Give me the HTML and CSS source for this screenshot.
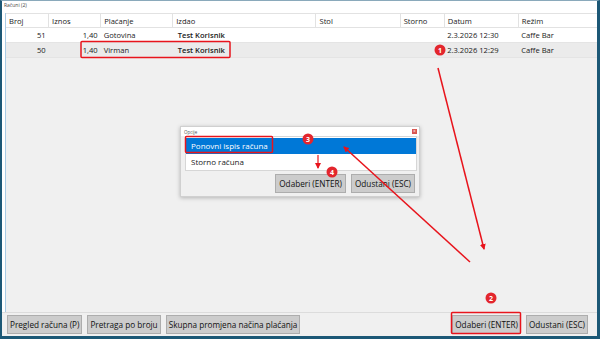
FILE: index.html
```html
<!DOCTYPE html>
<html lang="hr">
<head>
    <meta charset="UTF-8">
    <title>Računi</title>
    <link rel="stylesheet" href="styles.css">
</head>
<body>
    <div class="window">
        <div class="titlebar">Računi (2)</div>
        <div class="content">
            <table class="grid">
                <tr>
                    <th class="c-broj">Broj</th>
                    <th class="c-iznos">Iznos</th>
                    <th class="c-plac">Plaćanje</th>
                    <th class="c-izdao">Izdao</th>
                    <th class="c-stol">Stol</th>
                    <th class="c-storno">Storno</th>
                    <th class="c-datum">Datum</th>
                    <th class="c-rezim">Režim</th>
                </tr>
                <tr>
                    <td class="num">51</td>
                    <td class="num">1,40</td>
                    <td>Gotovina</td>
                    <td class="bold">Test Korisnik</td>
                    <td></td>
                    <td></td>
                    <td>2.3.2026 12:30</td>
                    <td>Caffe Bar</td>
                </tr>
                <tr class="alt">
                    <td class="num">50</td>
                    <td class="num">1,40</td>
                    <td>Virman</td>
                    <td class="bold">Test Korisnik</td>
                    <td></td>
                    <td></td>
                    <td>2.3.2026 12:29</td>
                    <td>Caffe Bar</td>
                </tr>
            </table>
        </div>
        <div class="bottom-bar">
            <div class="btn-group">
                <button class="btn">Pregled računa (P)</button>
                <button class="btn">Pretraga po broju</button>
                <button class="btn">Skupna promjena načina plaćanja</button>
            </div>
            <div class="btn-group">
                <button class="btn btn-main">Odaberi (ENTER)</button>
                <button class="btn">Odustani (ESC)</button>
            </div>
        </div>

        <div class="dialog">
            <div class="dialog-title">
                <span>Opcije</span>
                <span class="close">×</span>
            </div>
            <ul class="options">
                <li class="active">Ponovni ispis računa</li>
                <li>Storno računa</li>
            </ul>
            <div class="dialog-buttons">
                <button class="btn dlg-btn">Odaberi (ENTER)</button>
                <button class="btn dlg-btn">Odustani (ESC)</button>
            </div>
        </div>

        <svg class="marks" width="600" height="339" viewBox="0 0 600 339">
            <defs>
                <marker id="head" markerWidth="6" markerHeight="6" refX="5" refY="3" orient="auto" markerUnits="userSpaceOnUse">
                    <path d="M0,0 L6,3 L0,6 Z" fill="#e8141c"/>
                </marker>
            </defs>
            <!-- boxes -->
            <rect x="81" y="41.5" width="149" height="16" rx="1" class="box"/>
            <rect x="185.5" y="136.5" width="87" height="16" rx="1" class="box"/>
            <rect x="451.5" y="312.5" width="69" height="21" rx="1" class="box"/>
            <!-- arrows -->
            <line x1="438" y1="68" x2="484" y2="249" class="arrow" marker-end="url(#head)"/>
            <line x1="470" y1="262" x2="344" y2="147" class="arrow" marker-end="url(#head)"/>
            <line x1="318" y1="155" x2="318" y2="168" class="arrow thin" marker-end="url(#head)"/>
            <!-- badges -->
            <circle cx="440" cy="50" r="5.5" class="badge"/>
            <text x="440" y="52.6" class="badge-num">1</text>
            <circle cx="491" cy="298" r="5.5" class="badge"/>
            <text x="491" y="300.6" class="badge-num">2</text>
            <circle cx="308" cy="139" r="5.5" class="badge"/>
            <text x="308" y="141.6" class="badge-num">3</text>
            <circle cx="332" cy="172" r="5.5" class="badge"/>
            <text x="332" y="174.6" class="badge-num">4</text>
        </svg>
    </div>
</body>
</html>
```

FILE: styles.css
```css
body {
    margin: 0;
    font-family: "Open Sans", "Noto Sans", sans-serif;
    color: #1a1a1a;
}
.window {
    position: relative;
    width: 600px;
    height: 339px;
    box-sizing: border-box;
    border: 3px solid #1c5876;
    border-top: 1px solid #8aa9bb;
    border-left: 2px solid #1c5876;
    background: #ffffff;
    display: flex;
    flex-direction: column;
    overflow: hidden;
}
.titlebar {
    height: 12px;
    font-size: 5px;
    line-height: 8px;
    padding-left: 2px;
    color: #444;
}
.content {
    flex: 1;
    margin-left: 3px;
    border-left: 1px solid #a8cbe4;
    background: #f0f0f0;
}
.grid {
    border-collapse: collapse;
    table-layout: fixed;
    width: 592px;
    font-size: 7.6px;
}
.grid th {
    height: 13px;
    font-weight: normal;
    text-align: left;
    padding: 0 3px;
    background: #ffffff;
    border-top: 1px solid #e2e2e2;
    border-bottom: 1px solid #e2e2e2;
    border-left: 1px solid #e2e2e2;
    color: #222;
}
.grid th:first-child {
    border-left: none;
}
.grid td {
    height: 14px;
    padding: 0 3px;
    background: #ffffff;
    border-bottom: 1px solid #e4e4e4;
    white-space: nowrap;
}
.grid .alt td {
    background: #ebebeb;
}
.grid td.num {
    text-align: right;
}
.grid td.bold {
    font-weight: 600;
    padding-left: 5px;
}
.c-broj { width: 36px; }
.c-iznos { width: 45px; }
.c-plac { width: 65px; }
.c-izdao { width: 136px; }
.c-stol { width: 77px; }
.c-storno { width: 37px; }
.c-datum { width: 67px; }
.c-rezim { width: 73px; }

.bottom-bar {
    height: 23px;
    border-top: 1px solid #dcdcdc;
    background: #f0f0f0;
    display: flex;
    justify-content: space-between;
    align-items: center;
    padding: 0 9px 0 5px;
}
.btn-group {
    display: flex;
    gap: 5px;
}
.btn {
    font-family: "Open Sans", "Noto Sans", sans-serif;
    font-size: 8.2px;
    height: 19px;
    padding: 0 2px;
    background: #cccccc;
    border: 1px solid #adadad;
    color: #111;
    margin: 0;
}

.dialog {
    position: absolute;
    left: 178px;
    top: 125px;
    width: 240px;
    height: 71px;
    box-sizing: border-box;
    background: #f0f0f0;
    border: 1px solid #d0d0d0;
    box-shadow: 0 1px 4px rgba(0, 0, 0, 0.25);
    display: flex;
    flex-direction: column;
}
.dialog-title {
    height: 9px;
    background: #ffffff;
    display: flex;
    justify-content: space-between;
    align-items: center;
    font-size: 4.5px;
    color: #555;
    padding: 0 2px 0 3px;
}
.close {
    width: 5px;
    height: 5px;
    background: #d9534f;
    color: #fff;
    font-size: 5px;
    line-height: 5px;
    text-align: center;
}
.options {
    list-style: none;
    margin: 0 2px 0 4px;
    padding: 1px 0 0;
    background: #ffffff;
    border: 1px solid #d6d6d6;
    font-size: 8px;
    height: 32px;
}
.options li {
    height: 16px;
    line-height: 16px;
    padding-left: 5px;
}
.options li.active {
    background: #0078d7;
    color: #ffffff;
}
.dialog-buttons {
    flex: 1;
    display: flex;
    justify-content: flex-end;
    align-items: center;
    gap: 5px;
    padding-right: 4px;
}
.dlg-btn {
    height: 19px;
    padding: 0 3px;
}

.marks {
    position: absolute;
    left: -2px;
    top: -1px;
    pointer-events: none;
}
.box {
    fill: none;
    stroke: #e8141c;
    stroke-width: 1.5;
}
.arrow {
    stroke: #e8141c;
    stroke-width: 1.5;
}
.arrow.thin {
    stroke-width: 1.2;
}
.badge {
    fill: #e3262d;
}
.badge-num {
    fill: #ffffff;
    font-family: "Open Sans", sans-serif;
    font-size: 7px;
    font-weight: bold;
    text-anchor: middle;
}
```
